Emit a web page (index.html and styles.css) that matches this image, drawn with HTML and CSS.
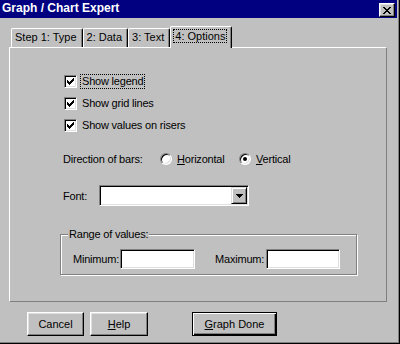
FILE: index.html
```html
<!DOCTYPE html>
<html>
<head>
  <link rel="stylesheet" href="styles.css">
</head>
<body>
  <div class="window">
    <div class="titlebar">
      <span class="title">Graph / Chart Expert</span>
      <div class="close">
        <svg width="8" height="7" viewBox="0 0 8 7"><path d="M0 0h2v1h-2z M6 0h2v1h-2z M1 1h2v1h-2z M5 1h2v1h-2z M2 2h4v1h-4z M3 3h2v1h-2z M2 4h4v1h-4z M1 5h2v1h-2z M5 5h2v1h-2z M0 6h2v1h-2z M6 6h2v1h-2z" fill="#000"/></svg>
      </div>
    </div>

    <div class="tabs">
      <div class="tab">Step 1: Type</div>
      <div class="tab">2: Data</div>
      <div class="tab">3: Text</div>
      <div class="tab active"><span class="focus">4: Options</span></div>
    </div>

    <div class="panel">
      <div class="checks">
        <div class="check">
          <span class="box"><svg width="7" height="7" viewBox="0 0 7 7"><path d="M6 0h1v1h-1z M5 1h2v1h-2z M0 2h1v1h-1z M4 2h3v1h-3z M0 3h2v1h-2z M3 3h3v1h-3z M0 4h5v1h-5z M1 5h3v1h-3z M2 6h1v1h-1z" fill="#000"/></svg></span>
          <span class="label focus">Show legend</span>
        </div>
        <div class="check">
          <span class="box"><svg width="7" height="7" viewBox="0 0 7 7"><path d="M6 0h1v1h-1z M5 1h2v1h-2z M0 2h1v1h-1z M4 2h3v1h-3z M0 3h2v1h-2z M3 3h3v1h-3z M0 4h5v1h-5z M1 5h3v1h-3z M2 6h1v1h-1z" fill="#000"/></svg></span>
          <span class="label">Show grid lines</span>
        </div>
        <div class="check">
          <span class="box"><svg width="7" height="7" viewBox="0 0 7 7"><path d="M6 0h1v1h-1z M5 1h2v1h-2z M0 2h1v1h-1z M4 2h3v1h-3z M0 3h2v1h-2z M3 3h3v1h-3z M0 4h5v1h-5z M1 5h3v1h-3z M2 6h1v1h-1z" fill="#000"/></svg></span>
          <span class="label">Show values on risers</span>
        </div>
      </div>

      <div class="direction">
        <span class="dir-label">Direction of bars:</span>
        <span class="option horiz"><span class="radio"></span><span><u>H</u>orizontal</span></span>
        <span class="option"><span class="radio on"></span><span><u>V</u>ertical</span></span>
      </div>

      <div class="font-row">
        <span class="font-label">Font:</span>
        <div class="combo">
          <div class="combo-btn">
            <svg width="7" height="4" viewBox="0 0 7 4"><path d="M0 0h7v1h-7z M1 1h5v1h-5z M2 2h3v1h-3z M3 3h1v1h-1z" fill="#000"/></svg>
          </div>
        </div>
      </div>

      <div class="group">
        <span class="group-title">Range of values:</span>
        <span class="min-label">Minimum:</span>
        <span class="field min-field"></span>
        <span class="max-label">Maximum:</span>
        <span class="field max-field"></span>
      </div>
    </div>

    <div class="buttons">
      <div class="btn cancel">Cancel</div>
      <div class="btn help"><u>H</u>elp</div>
      <div class="btn done"><u>G</u>raph Done</div>
    </div>
  </div>
</body>
</html>
```

FILE: styles.css
```css
body {
  margin: 0;
  background: #c0c0c0;
  font-family: "Liberation Sans", Arial, sans-serif;
  font-size: 11px;
  color: #000;
}

.window {
  width: 400px;
  height: 344px;
  box-sizing: border-box;
  background: #c0c0c0;
  border-right: 1px solid #000;
  border-bottom: 1px solid #000;
  box-shadow: inset -1px -1px 0 #808080;
  padding-right: 2px;
}

/* title bar */
.titlebar {
  height: 18px;
  background: #000080;
  display: flex;
  align-items: flex-start;
}

.title {
  color: #fff;
  font-weight: bold;
  font-size: 12px;
  line-height: 16px;
  padding-left: 2px;
}

.close {
  margin: 3px 2px 0 auto;
  width: 16px;
  height: 14px;
  box-sizing: border-box;
  background: #c0c0c0;
  border: 1px solid;
  border-color: #fff #000 #000 #fff;
  box-shadow: inset -1px -1px 0 #808080, inset 1px 1px 0 #dfdfdf;
  display: flex;
  justify-content: center;
  align-items: center;
}

.close svg, .box svg, .combo-btn svg {
  display: block;
}

/* tabs */
.tabs {
  display: flex;
  align-items: flex-end;
  height: 21px;
  margin: 8px 0 0 11px;
}

.tab {
  height: 19px;
  box-sizing: border-box;
  padding: 0 5px 0 3px;
  line-height: 17px;
  border: 1px solid #fff;
  border-bottom: none;
  border-right-color: #000;
  border-radius: 2px 2px 0 0;
  box-shadow: inset -1px 0 0 #808080;
  white-space: nowrap;
}

.tab.active {
  height: 22px;
  margin-bottom: -1px;
  padding: 1px 4px 0 2px;
  background: #c0c0c0;
  position: relative;
  z-index: 1;
}

.focus {
  border: 1px dotted #000;
  padding: 0 1px;
}

/* panel */
.panel {
  width: 378px;
  box-sizing: border-box;
  margin-left: 9px;
  padding: 27px 0 26px 50px;
  border: 1px solid;
  border-color: #fff #808080 #808080 #fff;
  letter-spacing: -0.2px;
}

.checks {
  display: flex;
  flex-direction: column;
  gap: 9px;
  margin-left: 4px;
}

.check {
  display: flex;
  align-items: center;
  height: 13px;
}

.box {
  width: 13px;
  height: 13px;
  box-sizing: border-box;
  background: #fff;
  border: 1px solid;
  border-color: #808080 #fff #fff #808080;
  box-shadow: inset 1px 1px 0 #000, inset -1px -1px 0 #dfdfdf;
  display: flex;
  justify-content: center;
  align-items: center;
}

.label {
  margin-left: 3px;
  padding: 0 1px;
  border: 1px solid transparent;
  line-height: 13px;
}

.label.focus {
  border: 1px dotted #000;
}

.direction {
  display: flex;
  align-items: center;
  height: 12px;
  margin: 21px 0 0 3px;
}

.dir-label {
  width: 97px;
}

.option {
  display: flex;
  align-items: center;
  gap: 5px;
}

.option.horiz {
  width: 79px;
}

.radio {
  width: 12px;
  height: 12px;
  box-sizing: border-box;
  border-radius: 50%;
  background: #fff;
  border: 1px solid;
  border-color: #808080 #fff #fff #808080;
  box-shadow: inset 1px 1px 0 #000, inset -1px -1px 0 #dfdfdf;
  display: flex;
  justify-content: center;
  align-items: center;
}

.radio.on::after {
  content: "";
  width: 4px;
  height: 4px;
  border-radius: 50%;
  background: #000;
}

.font-row {
  display: flex;
  align-items: center;
  margin: 20px 0 0 3px;
}

.font-label {
  width: 36px;
}

.combo {
  width: 150px;
  height: 21px;
  box-sizing: border-box;
  background: #fff;
  border: 1px solid;
  border-color: #808080 #fff #fff #808080;
  padding: 1px;
  box-shadow: inset 1px 1px 0 #000, inset -1px -1px 0 #dfdfdf;
  display: flex;
  justify-content: flex-end;
}

.combo-btn {
  width: 16px;
  height: 17px;
  box-sizing: border-box;
  background: #c0c0c0;
  border: 1px solid;
  border-color: #dfdfdf #000 #000 #dfdfdf;
  box-shadow: inset 1px 1px 0 #fff, inset -1px -1px 0 #808080;
  display: flex;
  justify-content: center;
  align-items: center;
}

/* range group */
.group {
  position: relative;
  width: 297px;
  box-sizing: border-box;
  margin-top: 28px;
  padding: 14px 0 5px 12px;
  border: 1px solid #808080;
  box-shadow: 1px 1px 0 #fff, inset 1px 1px 0 #fff;
  display: flex;
  align-items: center;
}

.group-title {
  position: absolute;
  top: -7px;
  left: 7px;
  padding: 0 1px;
  line-height: 13px;
  background: #c0c0c0;
}

.min-label {
  width: 47px;
  white-space: nowrap;
}

.max-label {
  width: 51px;
  margin-left: 20px;
  white-space: nowrap;
}

.field {
  height: 20px;
  box-sizing: border-box;
  background: #fff;
  border: 1px solid;
  border-color: #808080 #fff #fff #808080;
  box-shadow: inset 1px 1px 0 #000, inset -1px -1px 0 #dfdfdf;
}

.min-field {
  width: 75px;
}

.max-field {
  width: 74px;
}

/* buttons */
.buttons {
  display: flex;
  margin: 10px 0 0 27px;
}

.btn {
  height: 24px;
  box-sizing: border-box;
  line-height: 22px;
  text-align: center;
  border: 1px solid;
  border-color: #fff #000 #000 #fff;
  box-shadow: inset -1px -1px 0 #808080, inset 1px 1px 0 #dfdfdf;
}

.cancel {
  width: 57px;
}

.help {
  width: 58px;
  margin-left: 6px;
}

.done {
  width: 85px;
  margin-left: 44px;
  border-color: #000;
  box-shadow: inset 1px 1px 0 #fff, inset -1px -1px 0 #000, inset -2px -2px 0 #808080;
}
```
